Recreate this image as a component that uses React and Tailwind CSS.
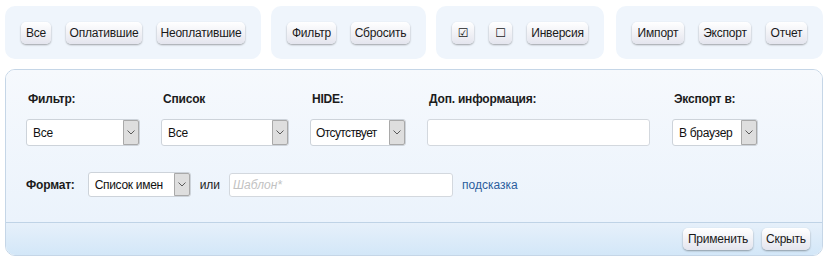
import React from 'react';

const Btn = ({ className = '', children }) => (
    <button className={`h-[22px] rounded-[5px] bg-linear-to-b from-white to-[#e4e5ee] shadow-[0_1px_2px_rgba(0,0,0,0.35)] text-[12px] text-[#1a1a1a] flex items-center justify-center tracking-[-0.2px] ${className}`}>
        {children}
    </button>
);

const Group = ({ children }) => (
    <div className="h-[53px] px-4 rounded-[10px] bg-[#eff5fc] flex items-center gap-[15px]">
        {children}
    </div>
);

const Chevron = () => (
    <svg width="8" height="5" viewBox="0 0 8 5" fill="none">
        <polyline points="0.5,0.5 4,4 7.5,0.5" stroke="#5a5a5a" strokeWidth="1" />
    </svg>
);

// fake select: white box with grey arrow cell on the right
const Select = ({ value, className = '', textClass = 'tracking-[-0.3px]' }) => (
    <div className={`flex bg-white border border-[#cdd3da] rounded-[3px] text-[12px] text-[#111] ${className}`}>
        <div className={`flex-1 min-w-0 flex items-center pl-[6px] whitespace-nowrap overflow-hidden ${textClass}`}>{value}</div>
        <div className="w-[16px] shrink-0 bg-[#dedede] border border-[#a9a9a9] rounded-r-[2px] flex items-center justify-center">
            <Chevron />
        </div>
    </div>
);

const Label = ({ children }) => (
    <div className="h-[14px] pl-[2px] text-[12px] font-bold text-[#1b1b1b] leading-[14px] tracking-[-0.2px] whitespace-nowrap">
        {children}
    </div>
);

export default function App() {
    return (
        <div className="w-[829px] h-[259px] bg-white font-['Liberation_Sans',Arial,sans-serif] pt-[6px] pl-[5px]">
            {/* top toolbar groups */}
            <div className="flex">
                <Group>
                    <Btn className="w-[30px]">Все</Btn>
                    <Btn className="w-[76px]">Оплатившие</Btn>
                    <Btn className="w-[88px]">Неоплатившие</Btn>
                </Group>
                <div className="ml-[10px]">
                    <Group>
                        <Btn className="w-[49px]">Фильтр</Btn>
                        <Btn className="w-[59px]">Сбросить</Btn>
                    </Group>
                </div>
                <div className="ml-[10px]">
                    <Group>
                        <Btn className="w-[22px] font-['DejaVu_Sans',sans-serif] text-[10px]">☑</Btn>
                        <Btn className="w-[23px] font-['DejaVu_Sans',sans-serif] text-[10px]">☐</Btn>
                        <Btn className="w-[61px]">Инверсия</Btn>
                    </Group>
                </div>
                <div className="ml-[12px]">
                    <Group>
                        <Btn className="w-[52px]">Импорт</Btn>
                        <Btn className="w-[52px]">Экспорт</Btn>
                        <Btn className="w-[41px]">Отчет</Btn>
                    </Group>
                </div>
            </div>

            {/* filter panel */}
            <div className="mt-[10px] w-[818px] h-[187px] rounded-[10px] border border-[#c5d6e7] overflow-hidden flex flex-col">
                <div className="flex-1 bg-linear-to-b from-[#f6f9fd] to-[#ebf3fc] pl-[20px] pt-[22px]">
                    <div className="flex">
                        <div className="w-[114px]">
                            <Label>Фильтр:</Label>
                            <Select value="Все" className="mt-[13px] h-[27px]" />
                        </div>
                        <div className="w-[128px] ml-[21px]">
                            <Label>Список</Label>
                            <Select value="Все" className="mt-[13px] h-[27px]" />
                        </div>
                        <div className="w-[96px] ml-[21px]">
                            <Label>HIDE:</Label>
                            <Select value="Отсутствует" className="mt-[13px] h-[27px]" textClass="tracking-[-0.6px] !pl-[5px]" />
                        </div>
                        <div className="w-[223px] ml-[21px]">
                            <Label>Доп. информация:</Label>
                            <div className="mt-[13px] h-[27px] bg-white border border-[#d3d8de] rounded-[3px]" />
                        </div>
                        <div className="w-[86px] ml-[22px]">
                            <Label>Экспорт в:</Label>
                            <Select value="В браузер" className="mt-[13px] h-[27px]" />
                        </div>
                    </div>

                    <div className="flex items-center mt-[26px] text-[12px]">
                        <span className="font-bold text-[#1b1b1b] tracking-[-0.2px]">Формат:</span>
                        <Select value="Список имен" className="ml-[13px] w-[103px] h-[25px]" />
                        <span className="ml-[9px] text-[#1b1b1b]">или</span>
                        <div className="ml-[9px] w-[224px] h-[24px] bg-white border border-[#d3d8de] rounded-[3px] flex items-center pl-[3px] italic text-[#c2c2c2]">
                            Шаблон*
                        </div>
                        <span className="ml-[9px] text-[#2b5d9c]">подсказка</span>
                    </div>
                </div>

                {/* footer */}
                <div className="h-[33px] border-t border-[#bfd3e6] bg-linear-to-b from-[#e6f0fa] to-[#d3e7f8] flex items-center justify-end gap-[9px] pr-[12px]">
                    <Btn className="w-[70px]">Применить</Btn>
                    <Btn className="w-[48px]">Скрыть</Btn>
                </div>
            </div>
        </div>
    );
}
